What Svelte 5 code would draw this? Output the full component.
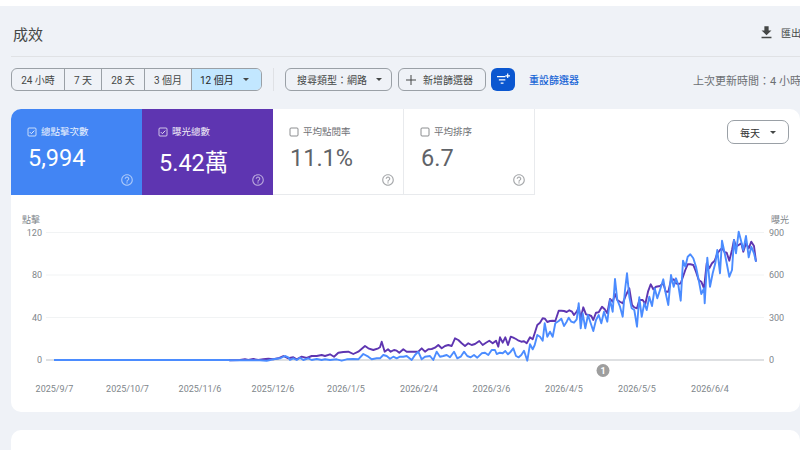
<script>
  const z = (pts, ox, oy) => pts.map(([x, y]) => [x / 3 + ox, y / 3 + oy]);
  const line = (parts) => parts.flat().map(([x, y]) => `${x.toFixed(1)},${y.toFixed(1)}`).join(' ');

  const blue = line([
    [[54, 360], [229, 360]],
    z([[0,91],[30,91],[60,91],[90,91],[110,92],[130,88],[150,85],[165,78],[175,82],[180,90],[190,85],[200,90],[210,83],[220,90],[235,85],[245,90],[260,87],[275,90],[285,88],[300,90],[320,88],[335,92],[350,88],[370,87],[385,88],[400,72],[415,80],[425,88],[440,85]], 230, 330),
    z([[0,145],[10,135],[20,138],[30,146],[40,140],[50,145],[60,140],[70,140],[80,138],[95,150],[105,135],[115,125],[125,148],[135,140],[150,138],[160,150],[170,125],[180,140],[190,138],[200,135],[210,142],[222,125],[232,145],[242,140],[252,125],[262,138],[272,142],[282,135],[292,143],[305,130],[315,128],[325,135],[335,120],[345,120],[350,132]], 380, 310),
    z([[0,398],[8,400],[16,393],[24,403],[32,395],[40,385],[48,408],[56,412],[64,405],[72,392],[82,422],[90,373],[98,388],[104,375],[112,345],[120,350],[128,362],[134,310],[142,350],[150,335],[158,350],[166,310],[176,303],[184,296],[192,318],[200,305],[206,293],[214,305],[222,308],[230,298],[236,250],[242,325],[248,280],[256,325],[264,285],[272,310],[280,333],[288,300],[296,285],[304,310],[312,275],[322,305],[330,240],[338,275],[345,177],[352,240],[360,260],[368,290],[375,210],[381,160],[388,230],[395,265],[403,270],[411,320],[418,232],[425,290],[433,250],[440,270],[448,230],[456,258],[464,205],[472,235],[480,210],[490,178],[497,220],[505,255],[513,165],[521,200],[528,175],[535,195],[542,242],[549,122],[556,140],[563,110],[571,103],[580,115],[588,140],[596,180],[604,222],[612,205],[614,250],[622,113],[630,200],[638,160],[646,130],[652,90],[660,160],[666,62],[674,100],[680,130],[688,170],[696,150],[702,60],[708,100],[716,35],[724,65],[730,90],[738,48],[746,112],[754,80],[762,100],[768,125]], 500, 220)
  ]);

  const purple = line([
    [[54, 360], [229, 360]],
    z([[0,91],[30,90],[45,88],[55,90],[70,87],[85,90],[100,88],[115,86],[130,88],[145,85],[160,78],[175,85],[190,82],[200,88],[215,80],[230,84],[245,78],[260,78],[275,75],[285,78],[300,73],[312,80],[325,68],[340,66],[355,65],[370,72],[385,65],[405,48],[415,55],[430,60],[445,55]], 230, 330),
    z([[0,112],[5,95],[14,125],[24,118],[32,125],[42,120],[50,122],[58,128],[70,118],[80,125],[92,125],[105,125],[115,125],[125,115],[135,125],[145,118],[155,117],[165,113],[175,105],[185,115],[195,108],[205,105],[215,108],[225,85],[235,90],[245,100],[255,108],[265,100],[275,105],[285,102],[298,93],[308,105],[318,98],[328,92],[338,100],[348,92],[355,110]], 380, 310),
    z([[0,352],[8,368],[16,352],[24,375],[32,350],[40,353],[48,357],[56,362],[64,365],[72,364],[80,370],[90,352],[98,358],[104,340],[112,315],[120,308],[128,295],[135,296],[142,306],[150,303],[158,302],[166,303],[176,272],[184,272],[192,273],[200,276],[208,271],[216,275],[222,285],[230,275],[236,262],[242,295],[250,262],[258,283],[266,285],[274,288],[280,300],[288,278],[296,277],[306,260],[314,268],[322,280],[330,237],[338,245],[345,222],[352,240],[360,245],[368,250],[378,225],[388,205],[396,255],[403,262],[411,265],[418,240],[428,240],[436,252],[444,215],[452,193],[460,208],[468,200],[480,198],[490,190],[497,215],[505,215],[513,180],[521,178],[528,190],[535,192],[542,190],[549,170],[556,150],[563,133],[571,133],[580,135],[588,155],[596,180],[604,185],[612,205],[620,130],[628,145],[636,130],[644,122],[652,100],[660,90],[666,85],[674,97],[680,98],[688,122],[696,90],[702,60],[708,80],[716,75],[724,70],[730,95],[738,70],[746,85],[754,65],[762,78],[768,125]], 500, 220)
  ]);

  const ranges = [
    { label: '24 小時', w: 53 },
    { label: '7 天', w: 37 },
    { label: '28 天', w: 43 },
    { label: '3 個月', w: 47 },
  ];
  const metrics = [
    { label: '總點擊次數', value: '5,994', cls: 'm-blue', on: true },
    { label: '曝光總數', value: '5.42萬', cls: 'm-purple', on: true },
    { label: '平均點閱率', value: '11.1%', cls: 'm-off', on: false },
    { label: '平均排序', value: '6.7', cls: 'm-off', on: false },
  ];
  const grid = [
    { y: 232.5, l: '120', r: '900' },
    { y: 275, l: '80', r: '600' },
    { y: 317.5, l: '40', r: '300' },
  ];
  const dates = [
    ['2025/9/7', 54.5], ['2025/10/7', 127.5], ['2025/11/6', 200], ['2025/12/6', 273], ['2026/1/5', 346],
    ['2026/2/4', 419], ['2026/3/6', 491.5], ['2026/4/5', 564], ['2026/5/5', 637], ['2026/6/4', 710],
  ];
</script>

<div class="page">
  <header class="head">
    <h1>成效</h1>
    <div class="export">
      <svg viewBox="0 0 24 24" width="17" height="17"><path d="M5 20h14v-2H5v2zM19 9h-4V3H9v6H5l7 7 7-7z" fill="#444746" /></svg>
      <span>匯出</span>
    </div>
  </header>

  <div class="toolbar">
    <div class="segments">
      {#each ranges as r}
        <div class="seg" style="width:{r.w}px">{r.label}</div>
      {/each}
      <div class="seg seg-on">12 個月<i class="caret"></i></div>
    </div>
    <div class="vr"></div>
    <div class="chip type">搜尋類型：網路<i class="caret"></i></div>
    <div class="chip add">
      <svg viewBox="0 0 12 12" width="12" height="12"><path d="M6 1v10M1 6h10" stroke="#444746" stroke-width="1" fill="none" /></svg>
      新增篩選器
    </div>
    <div class="fbtn">
      <svg viewBox="0 0 16 14" width="15" height="13">
        <path d="M1 4h9M3 7.5h7M5 11h3" stroke="#fff" stroke-width="1.4" fill="none" />
        <path d="M12.5 0.5v5M10 3h5" stroke="#fff" stroke-width="1.3" fill="none" />
      </svg>
    </div>
    <div class="reset">重設篩選器</div>
    <div class="updated">上次更新時間：4 小時前</div>
  </div>

  <section class="card">
    <div class="metrics">
      {#each metrics as m}
        <div class="metric {m.cls}">
          <div class="mlabel">
            <svg class="cb" viewBox="0 0 10 10" width="10" height="10">
              <rect x="1" y="1" width="8" height="8" rx="1" fill="none" stroke="currentColor" stroke-width="0.8" />
              {#if m.on}<path d="M2.8 5.1 4.4 6.7 7.3 3.6" fill="none" stroke="currentColor" stroke-width="0.9" />{/if}
            </svg>
            {m.label}
          </div>
          <div class="mvalue">{m.value}</div>
          <svg class="help" viewBox="0 0 24 24" width="14" height="14"><path fill="currentColor" d="M11 18h2v-2h-2v2zm1-16C6.48 2 2 6.48 2 12s4.48 10 10 10 10-4.48 10-10S17.52 2 12 2zm0 18c-4.41 0-8-3.59-8-8s3.59-8 8-8 8 3.59 8 8-3.59 8-8 8zm0-14c-2.21 0-4 1.79-4 4h2c0-1.1.9-2 2-2s2 .9 2 2c0 2-3 1.75-3 5h2c0-2.25 3-2.5 3-5 0-2.21-1.79-4-4-4z" /></svg>
        </div>
      {/each}
      <div class="daily">每天<i class="caret"></i></div>
    </div>

    <svg class="chart" viewBox="11 195 789 217" width="789" height="217">
      <text class="t" x="22" y="223">點擊</text>
      <text class="t" x="771" y="223">曝光</text>
      {#each grid as g}
        <line x1="46" x2="764" y1={g.y} y2={g.y} stroke="#f1f3f4" />
        <text class="t" x="42" y={g.y + 3} text-anchor="end">{g.l}</text>
        <text class="t" x="769" y={g.y + 3}>{g.r}</text>
      {/each}
      <line x1="46" x2="764" y1="360" y2="360" stroke="#bdc1c6" />
      <text class="t" x="42" y="363" text-anchor="end">0</text>
      <text class="t" x="769" y="363">0</text>
      <polyline points={purple} fill="none" stroke="#5e35b1" stroke-width="1.9" stroke-linejoin="round" />
      <polyline points={blue} fill="none" stroke="#4b8cff" stroke-width="1.9" stroke-linejoin="round" />
      {#each dates as d}
        <text class="t" x={d[1]} y="392" text-anchor="middle">{d[0]}</text>
      {/each}
      <circle cx="603" cy="370.5" r="6.5" fill="#9e9e9e" />
      <text x="603" y="373.5" text-anchor="middle" class="mark">1</text>
    </svg>
  </section>

  <section class="card2"></section>
</div>

<style>
  :global(body) { margin: 0; }
  .page {
    width: 800px;
    height: 450px;
    overflow: hidden;
    box-sizing: border-box;
    background: #eff2f7;
    border-top: 6px solid #fff;
    font-family: Roboto, "Noto Sans CJK TC", sans-serif;
    color: #444746;
  }
  .head {
    height: 51px;
    margin-left: 11px;
    box-sizing: border-box;
    border-bottom: 1px solid #e0e2e5;
    display: flex;
    align-items: center;
    justify-content: space-between;
    padding-left: 2px;
  }
  h1 { margin: 4px 0 0; font-size: 15px; font-weight: 400; color: #444746; }
  .export {
    display: flex;
    align-items: center;
    gap: 6px;
    font-size: 10px;
    width: 42px;
    flex: none;
    white-space: nowrap;
    overflow: hidden;
    margin-top: 3px;
  }
  .export svg { flex: none; }
  .export span { flex: none; }
  .toolbar {
    display: flex;
    align-items: center;
    height: 23px;
    margin: 11px 0 18px 11px;
    font-size: 10px;
    white-space: nowrap;
  }
  .segments {
    display: flex;
    width: 251px;
    height: 23px;
    box-sizing: border-box;
    border: 1px solid #9aa0a6;
    border-radius: 6px;
    overflow: hidden;
    flex: none;
  }
  .seg {
    display: flex;
    align-items: center;
    justify-content: center;
    box-sizing: border-box;
    border-right: 1px solid #9aa0a6;
  }
  .seg-on {
    flex: 1;
    border-right: 0;
    background: #c2e7ff;
    color: #1f1f1f;
    justify-content: flex-start;
    padding-left: 8px;
    gap: 9px;
  }
  .caret {
    display: inline-block;
    width: 0;
    height: 0;
    border-left: 3px solid transparent;
    border-right: 3px solid transparent;
    border-top: 3px solid #444746;
  }
  .vr { width: 1px; height: 23px; background: #dfe1e5; margin: 0 11px; flex: none; }
  .chip {
    height: 23px;
    box-sizing: border-box;
    border: 1px solid #9aa0a6;
    border-radius: 6px;
    display: flex;
    align-items: center;
    flex: none;
  }
  .type { width: 107px; padding-left: 11px; gap: 9px; }
  .add { width: 88px; margin-left: 6px; padding-left: 6px; gap: 6px; }
  .fbtn {
    width: 24px;
    height: 23px;
    margin-left: 5px;
    border-radius: 6px;
    background: #0b57d0;
    display: flex;
    align-items: center;
    justify-content: center;
    flex: none;
  }
  .reset { margin-left: 14px; color: #1a66d6; font-weight: 500; flex: none; }
  .updated { margin-left: 114px; color: #6b6f73; flex: none; font-size: 11px; }
  .card {
    margin-left: 11px;
    height: 303px;
    background: #fff;
    border-radius: 10px;
    overflow: hidden;
  }
  .metrics { display: flex; height: 86px; align-items: flex-start; }
  .metric {
    width: 131px;
    height: 86px;
    box-sizing: border-box;
    padding: 16px 0 0 17px;
    display: flex;
    flex-direction: column;
    flex: none;
  }
  .m-blue { background: #4285f4; color: #fff; }
  .m-purple { background: #5e35b1; color: #fff; }
  .m-off { color: #5f6368; border-right: 1px solid #e8eaed; border-bottom: 1px solid #e8eaed; }
  .mlabel { display: flex; align-items: center; gap: 4px; font-size: 9.5px; line-height: 14px; opacity: 0.9; margin-left: -1px; }
  .cb { flex: none; }
  .mvalue { font-size: 23.5px; height: 28px; margin-top: 5px; white-space: nowrap; }
  .help { align-self: flex-end; margin: 1px 8px 0 0; opacity: 0.55; flex: none; }
  .daily {
    margin: 11px 11px 0 auto;
    width: 62px;
    height: 24px;
    box-sizing: border-box;
    border: 1px solid #9aa0a6;
    border-radius: 7px;
    display: flex;
    align-items: center;
    padding-left: 12px;
    gap: 10px;
    font-size: 10px;
    color: #333;
  }
  .chart { display: block; }
  .t { font-size: 9px; fill: #80868b; font-family: Roboto, "Noto Sans CJK TC", sans-serif; }
  .mark { font-size: 9px; font-weight: 700; fill: #fff; font-family: Roboto, sans-serif; }
  .card2 {
    margin: 18px 0 0 11px;
    height: 60px;
    background: #fff;
    border-radius: 10px 10px 0 0;
  }
</style>
